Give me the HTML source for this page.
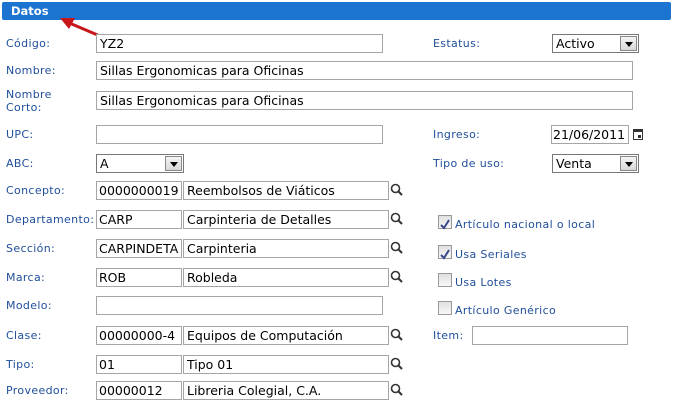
<!DOCTYPE html>
<html><head><meta charset="utf-8"><style>
body{margin:0;width:673px;height:413px;background:#fff;position:relative;overflow:hidden;font-family:"DejaVu Sans","Liberation Sans",sans-serif}
.hd{position:absolute;left:2px;top:2px;width:669px;height:18px;background:#1b74d0;border-radius:2px}
.hd span{position:absolute;left:9px;top:2px;color:#fff;font-weight:bold;font-size:11.5px}
.l{position:absolute;font-size:11px;color:#1f4e9a;line-height:13px;letter-spacing:0.35px}
.i{position:absolute;box-sizing:border-box;border:1px solid #a5a5a5;background:#fff;font-size:12.5px;color:#000;padding-left:3px;line-height:17px;height:19px;white-space:nowrap;overflow:hidden}
.s .b{position:absolute;right:1px;top:1px;width:17px;height:15px;background:linear-gradient(#f4f4f4,#d8d8d8);border:1px solid #888;box-sizing:border-box}
.s .b:after{content:"";position:absolute;left:4px;top:5px;border-left:4px solid transparent;border-right:4px solid transparent;border-top:5px solid #000}
.s{border-color:#777}
.cb{position:absolute;left:438px;width:14px;height:14px;box-sizing:border-box;border:1px solid #999;background:linear-gradient(#e0e0e0,#f8f8f8)}
.mg{position:absolute;left:390px}
</style></head><body>
<div class="hd"><span>Datos</span></div>
<svg style="position:absolute;left:55px;top:14px" width="60" height="30"><line x1="52" y1="25" x2="12" y2="8" stroke="#c8171b" stroke-width="3"/><polygon points="5,4 20,4 14,15" fill="#c8171b"/></svg>

<div class="l" style="left:6px;top:37px">Código:</div>
<div class="i" style="left:96px;top:34px;width:287px">YZ2</div>
<div class="l" style="left:433px;top:37px">Estatus:</div>
<div class="i s" style="left:552px;top:34px;width:87px">Activo<div class="b"></div></div>

<div class="l" style="left:6px;top:64px">Nombre:</div>
<div class="i" style="left:96px;top:61px;width:537px">Sillas Ergonomicas para Oficinas</div>
<div class="l" style="left:6px;top:88px">Nombre<br>Corto:</div>
<div class="i" style="left:96px;top:91px;width:537px">Sillas Ergonomicas para Oficinas</div>

<div class="l" style="left:6px;top:128px">UPC:</div>
<div class="i" style="left:96px;top:125px;width:287px"></div>
<div class="l" style="left:433px;top:128px">Ingreso:</div>
<div class="i" style="left:551px;top:125px;width:78px;padding-left:1px">21/06/2011</div>
<svg style="position:absolute;left:632px;top:127px" width="12" height="14"><rect x="1" y="2" width="10" height="11" fill="#333"/><rect x="2" y="5" width="8" height="7" fill="#fff"/><rect x="6" y="8" width="3" height="3" fill="#333"/></svg>

<div class="l" style="left:6px;top:157px">ABC:</div>
<div class="i s" style="left:96px;top:154px;width:88px">A<div class="b"></div></div>
<div class="l" style="left:433px;top:157px">Tipo de uso:</div>
<div class="i s" style="left:552px;top:154px;width:87px">Venta<div class="b"></div></div>

<div class="l" style="left:6px;top:184px">Concepto:</div>
<div class="i" style="left:96px;top:181px;width:86px;padding-left:2px">0000000019</div>
<div class="i" style="left:183px;top:181px;width:206px">Reembolsos de Viáticos</div>

<div class="l" style="left:6px;top:213px">Departamento:</div>
<div class="i" style="left:96px;top:210px;width:86px;padding-left:2px">CARP</div>
<div class="i" style="left:183px;top:210px;width:206px">Carpinteria de Detalles</div>

<div class="l" style="left:6px;top:242px">Sección:</div>
<div class="i" style="left:96px;top:239px;width:86px;padding-left:2px">CARPINDETA</div>
<div class="i" style="left:183px;top:239px;width:206px">Carpinteria</div>

<div class="l" style="left:6px;top:271px">Marca:</div>
<div class="i" style="left:96px;top:268px;width:86px;padding-left:2px">ROB</div>
<div class="i" style="left:183px;top:268px;width:206px">Robleda</div>

<div class="l" style="left:6px;top:299px">Modelo:</div>
<div class="i" style="left:96px;top:296px;width:287px"></div>

<div class="l" style="left:6px;top:329px">Clase:</div>
<div class="i" style="left:96px;top:326px;width:86px;padding-left:2px">00000000-4</div>
<div class="i" style="left:183px;top:326px;width:206px">Equipos de Computación</div>
<div class="l" style="left:433px;top:329px">Item:</div>
<div class="i" style="left:472px;top:326px;width:156px"></div>

<div class="l" style="left:6px;top:358px">Tipo:</div>
<div class="i" style="left:96px;top:355px;width:86px;padding-left:2px">01</div>
<div class="i" style="left:183px;top:355px;width:206px">Tipo 01</div>

<div class="l" style="left:6px;top:384px">Proveedor:</div>
<div class="i" style="left:96px;top:381px;width:86px;padding-left:2px">00000012</div>
<div class="i" style="left:183px;top:381px;width:206px">Libreria Colegial, C.A.</div>

<svg class="mg" style="top:183px" width="14" height="14"><circle cx="5.5" cy="5.5" r="4" fill="none" stroke="#333" stroke-width="1.6"/><line x1="8.5" y1="8.5" x2="12" y2="12" stroke="#333" stroke-width="2"/></svg>
<svg class="mg" style="top:212px" width="14" height="14"><circle cx="5.5" cy="5.5" r="4" fill="none" stroke="#333" stroke-width="1.6"/><line x1="8.5" y1="8.5" x2="12" y2="12" stroke="#333" stroke-width="2"/></svg>
<svg class="mg" style="top:241px" width="14" height="14"><circle cx="5.5" cy="5.5" r="4" fill="none" stroke="#333" stroke-width="1.6"/><line x1="8.5" y1="8.5" x2="12" y2="12" stroke="#333" stroke-width="2"/></svg>
<svg class="mg" style="top:270px" width="14" height="14"><circle cx="5.5" cy="5.5" r="4" fill="none" stroke="#333" stroke-width="1.6"/><line x1="8.5" y1="8.5" x2="12" y2="12" stroke="#333" stroke-width="2"/></svg>
<svg class="mg" style="top:328px" width="14" height="14"><circle cx="5.5" cy="5.5" r="4" fill="none" stroke="#333" stroke-width="1.6"/><line x1="8.5" y1="8.5" x2="12" y2="12" stroke="#333" stroke-width="2"/></svg>
<svg class="mg" style="top:357px" width="14" height="14"><circle cx="5.5" cy="5.5" r="4" fill="none" stroke="#333" stroke-width="1.6"/><line x1="8.5" y1="8.5" x2="12" y2="12" stroke="#333" stroke-width="2"/></svg>
<svg class="mg" style="top:383px" width="14" height="14"><circle cx="5.5" cy="5.5" r="4" fill="none" stroke="#333" stroke-width="1.6"/><line x1="8.5" y1="8.5" x2="12" y2="12" stroke="#333" stroke-width="2"/></svg>

<div class="cb" style="top:215px"><svg width="12" height="12"><path d="M2 6 L5 9 L10 1" fill="none" stroke="#3a4a8a" stroke-width="2"/></svg></div>
<div class="l" style="left:455px;top:218px">Artículo nacional o local</div>
<div class="cb" style="top:245px"><svg width="12" height="12"><path d="M2 6 L5 9 L10 1" fill="none" stroke="#3a4a8a" stroke-width="2"/></svg></div>
<div class="l" style="left:455px;top:248px">Usa Seriales</div>
<div class="cb" style="top:273px"></div>
<div class="l" style="left:455px;top:276px">Usa Lotes</div>
<div class="cb" style="top:301px"></div>
<div class="l" style="left:455px;top:304px">Artículo Genérico</div>
</body></html>
